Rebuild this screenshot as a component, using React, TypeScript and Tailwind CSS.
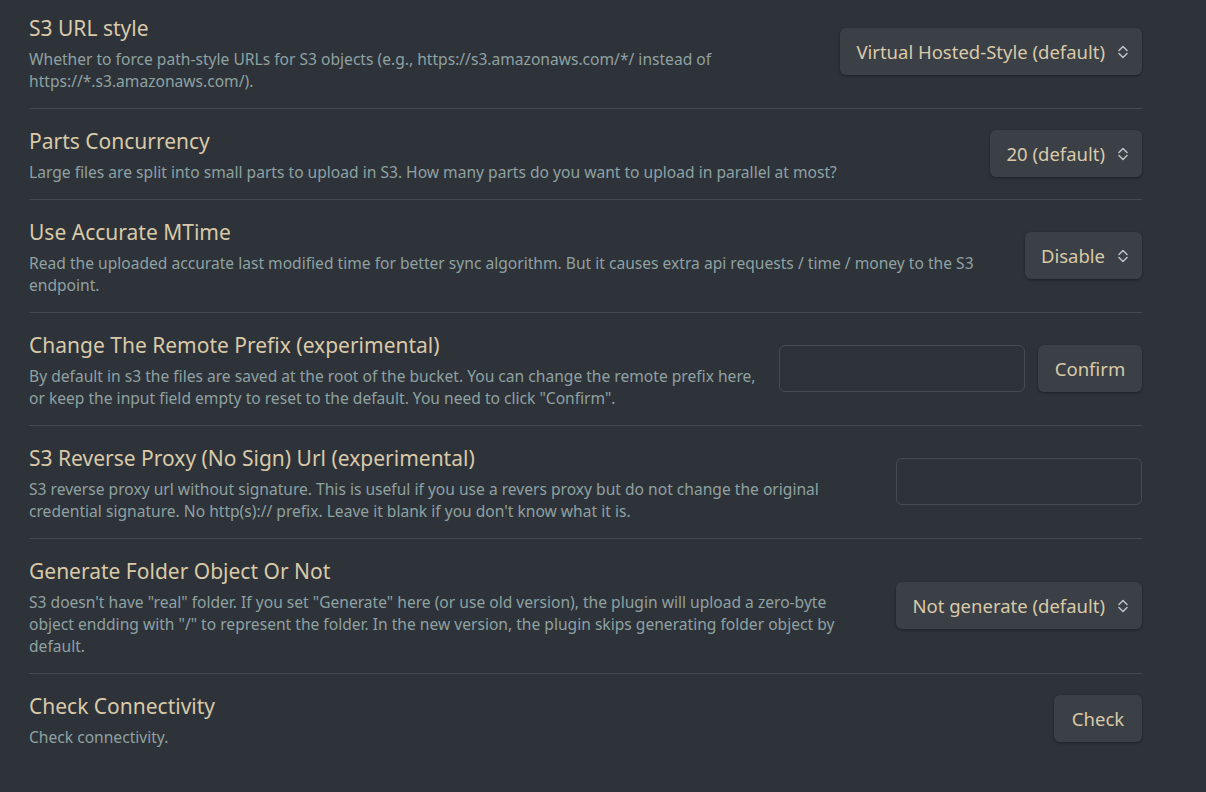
import React from "react";

const font = { fontFamily: '"Noto Sans", "Open Sans", sans-serif' };

const Chevrons = () => (
  <svg width="12" height="16" viewBox="0 0 12 16" fill="none" className="shrink-0">
    <path d="M2 6.5 L6 2.5 L10 6.5" stroke="#b9bec5" strokeWidth="1.6" strokeLinecap="round" strokeLinejoin="round" />
    <path d="M2 9.5 L6 13.5 L10 9.5" stroke="#b9bec5" strokeWidth="1.6" strokeLinecap="round" strokeLinejoin="round" />
  </svg>
);

const Select = ({ label }: { label: string }) => (
  <div className="flex h-[47px] items-center gap-3 whitespace-nowrap rounded-md bg-[#3b4047] pl-4 pr-[13px] text-[18.5px] text-[#d9c9a8] shadow-[0_1px_3px_rgba(0,0,0,0.35)]">
    <span>{label}</span>
    <Chevrons />
  </div>
);

const Button = ({ label, className = "" }: { label: string; className?: string }) => (
  <button className={`h-[47px] rounded-md bg-[#3b4047] text-[18.5px] text-[#d9c9a8] shadow-[0_1px_3px_rgba(0,0,0,0.35)] ${className}`}>
    {label}
  </button>
);

const Input = () => (
  <input className="h-[47px] w-[246px] rounded-md border border-[#464c55] bg-transparent outline-none" />
);

type Row = { name: string; desc: string; control: React.ReactNode; infoClass?: string };

const rows: Row[] = [
  {
    name: "S3 URL style",
    desc: "Whether to force path-style URLs for S3 objects (e.g., https://s3.amazonaws.com/*/ instead of https://*.s3.amazonaws.com/).",
    control: <Select label="Virtual Hosted-Style (default)" />,
  },
  {
    name: "Parts Concurrency",
    desc: "Large files are split into small parts to upload in S3. How many parts do you want to upload in parallel at most?",
    control: <Select label="20 (default)" />,
  },
  {
    name: "Use Accurate MTime",
    desc: "Read the uploaded accurate last modified time for better sync algorithm. But it causes extra api requests / time / money to the S3 endpoint.",
    control: <Select label="Disable" />,
  },
  {
    name: "Change The Remote Prefix (experimental)",
    desc: 'By default in s3 the files are saved at the root of the bucket. You can change the remote prefix here, or keep the input field empty to reset to the default. You need to click "Confirm".',
    control: (
      <div className="flex items-center gap-[13px]">
        <Input />
        <Button label="Confirm" className="w-[104px]" />
      </div>
    ),
    infoClass: "mr-3",
  },
  {
    name: "S3 Reverse Proxy (No Sign) Url (experimental)",
    desc: "S3 reverse proxy url without signature. This is useful if you use a revers proxy but do not change the original credential signature. No http(s):// prefix. Leave it blank if you don't know what it is.",
    control: <Input />,
  },
  {
    name: "Generate Folder Object Or Not",
    desc: 'S3 doesn\'t have "real" folder. If you set "Generate" here (or use old version), the plugin will upload a zero-byte object endding with "/" to represent the folder. In the new version, the plugin skips generating folder object by default.',
    control: <Select label="Not generate (default)" />,
    infoClass: "mr-[60px]",
  },
  {
    name: "Check Connectivity",
    desc: "Check connectivity.",
    control: <Button label="Check" className="w-[88px]" />,
  },
];

export default function App() {
  return (
    <div className="min-h-[792px] w-full overflow-hidden bg-[#2e333a]" style={font}>
      <div className="ml-[29px] mr-[64px] -mt-[5px]">
        {rows.map((r, i) => (
          <div
            key={r.name}
            className={`flex items-center pb-4 ${i > 0 ? "border-t border-[#444950] pt-[19px]" : "pt-5"}`}
          >
            <div className={`flex-1 ${r.infoClass ?? "mr-6"}`}>
              <div className="text-[21px] leading-[26px] text-[#d9c9a8]">{r.name}</div>
              <div className="mt-[7px] text-[15.6px] leading-[22px] text-[#8fa1a1]">{r.desc}</div>
            </div>
            <div className="mb-1 shrink-0">{r.control}</div>
          </div>
        ))}
      </div>
    </div>
  );
}
